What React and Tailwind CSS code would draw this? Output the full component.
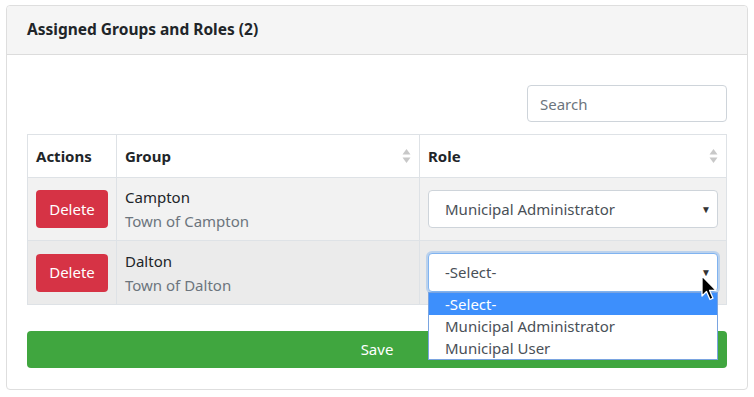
import { useState } from "react";

const rows = [
  { id: 1, name: "Campton", town: "Town of Campton", role: "Municipal Administrator" },
  { id: 2, name: "Dalton", town: "Town of Dalton", role: "-Select-" },
];

const roleOptions = ["-Select-", "Municipal Administrator", "Municipal User"];

const SortIcon = () => (
  <svg width="9" height="16" viewBox="0 0 9 16" className="text-[#c8c8c8]">
    <path d="M4.5 1 L8.5 6.5 L0.5 6.5 Z" fill="currentColor" />
    <path d="M4.5 15 L8.5 9.5 L0.5 9.5 Z" fill="currentColor" />
  </svg>
);

const Cursor = () => (
  <svg width="18" height="27" viewBox="0 0 18 27" className="absolute right-[-1px] top-[22px] z-20">
    <path
      d="M1 1 L1 21 L5.5 16.5 L9 24.5 L12 23.2 L8.6 15.4 L15 15.4 Z"
      fill="#000"
      stroke="#fff"
      strokeWidth="1.3"
      strokeLinejoin="round"
    />
  </svg>
);

const RoleSelect = ({ value, open }) => (
  <div className="relative">
    <div
      className={
        open
          ? "h-[39px] rounded-[4px] border border-[#80b3f0] bg-white shadow-[0_0_0_2px_rgba(128,179,240,0.45)] flex items-center justify-between pl-[16px] pr-[6px] text-[#495057]"
          : "h-[38px] rounded-[4px] border border-[#ced4da] bg-white flex items-center justify-between pl-[16px] pr-[6px] text-[#495057]"
      }
    >
      <span>{value}</span>
      <span className="text-[10px] text-[#333]">▼</span>
    </div>
    {open && (
      <>
        <Cursor />
        <div className="absolute left-0 right-0 top-[39px] z-10 border border-[#7aa4e0] bg-white text-[#495057]">
          {roleOptions.map((opt, i) => (
            <div
              key={opt}
              className={
                i === 0
                  ? "h-[22px] leading-[22px] pl-[16px] bg-[#3d8ffc] text-white"
                  : "h-[22px] leading-[22px] pl-[16px]"
              }
            >
              {opt}
            </div>
          ))}
        </div>
      </>
    )}
  </div>
);

export default function App() {
  const [search, setSearch] = useState("");

  return (
    <div className="bg-white w-[754px] h-[397px] pt-[5px] px-[6px] font-['Noto_Sans',sans-serif] text-[15px] text-[#212529]">
      <div className="border border-[#dedede] rounded-[4px] h-[385px] flex flex-col">
        <div className="h-[49px] bg-[#f5f5f5] border-b border-[#dcdcdc] flex items-center px-[20px] rounded-t-[4px]">
          <h2 className="font-bold text-[15.5px]">Assigned Groups and Roles (2)</h2>
        </div>

        <div className="px-[20px] pt-[30px]">
          <div className="flex justify-end">
            <input
              value={search}
              onChange={(e) => setSearch(e.target.value)}
              placeholder="Search"
              className="w-[200px] h-[37px] rounded-[4px] border border-[#ced4da] px-[12px] text-[15px] placeholder-[#6c757d] outline-none"
            />
          </div>

          <table className="mt-[12px] w-full border-collapse border border-[#dee2e6]">
            <thead>
              <tr className="h-[43px] bg-white">
                <th className="w-[89px] border border-[#dee2e6] text-left px-[8px] font-bold">Actions</th>
                <th className="w-[303px] border border-[#dee2e6] text-left px-[8px] font-bold">
                  <div className="flex items-center justify-between">
                    Group <SortIcon />
                  </div>
                </th>
                <th className="border border-[#dee2e6] text-left px-[8px] font-bold">
                  <div className="flex items-center justify-between">
                    Role <SortIcon />
                  </div>
                </th>
              </tr>
            </thead>
            <tbody>
              {rows.map((r, i) => (
                <tr key={r.id} className={i === 0 ? "h-[63px] bg-[#f2f2f2]" : "h-[64px] bg-[#ebebeb]"}>
                  <td className="border border-[#dee2e6] px-[8px]">
                    <button className="w-[72px] h-[38px] rounded-[4px] bg-[#d63345] text-white">Delete</button>
                  </td>
                  <td className="border border-[#dee2e6] px-[8px] leading-[24px]">
                    <div>{r.name}</div>
                    <div className="text-[#6c757d]">{r.town}</div>
                  </td>
                  <td className="border border-[#dee2e6] pl-[8px] pr-[8px]">
                    <RoleSelect value={r.role} open={i === 1} />
                  </td>
                </tr>
              ))}
            </tbody>
          </table>

          <button className="mt-[26px] w-full h-[37px] rounded-[4px] bg-[#40a63f] text-white">Save</button>
        </div>
      </div>
    </div>
  );
}
